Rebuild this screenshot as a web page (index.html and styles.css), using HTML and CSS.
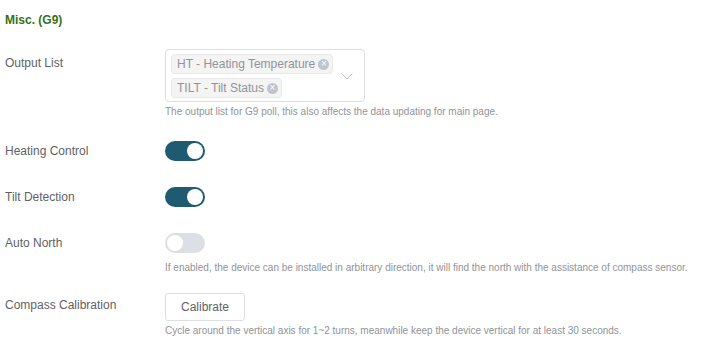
FILE: index.html
```html
<!DOCTYPE html>
<html lang="en">

<head>
    <meta charset="UTF-8">
    <meta name="viewport" content="width=device-width, initial-scale=1.0">
    <title>Misc. (G9)</title>
    <link rel="stylesheet" href="styles.css">
</head>

<body>
    <div class="section-title">Misc. (G9)</div>

    <div class="form-item first">
        <div class="label">Output List</div>
        <div class="content">
            <div class="select">
                <div class="tags">
                    <span class="tag">HT - Heating Temperature <span class="tag-close">&times;</span></span>
                    <span class="tag">TILT - Tilt Status <span class="tag-close">&times;</span></span>
                </div>
                <svg class="arrow" width="12" height="7" viewBox="0 0 12 7">
                    <path d="M0.5 0.5 L6 6 L11.5 0.5" fill="none" stroke="#c0c4cc" stroke-width="1"/>
                </svg>
            </div>
            <div class="help">The output list for G9 poll, this also affects the data updating for main page.</div>
        </div>
    </div>

    <div class="form-item">
        <div class="label">Heating Control</div>
        <div class="content">
            <span class="switch on"></span>
        </div>
    </div>

    <div class="form-item">
        <div class="label">Tilt Detection</div>
        <div class="content">
            <span class="switch on"></span>
        </div>
    </div>

    <div class="form-item">
        <div class="label">Auto North</div>
        <div class="content">
            <span class="switch"></span>
            <div class="help spaced">If enabled, the device can be installed in arbitrary direction, it will find the north with the assistance of compass sensor.</div>
        </div>
    </div>

    <div class="form-item">
        <div class="label label-btn">Compass Calibration</div>
        <div class="content">
            <button class="btn">Calibrate</button>
            <div class="help">Cycle around the vertical axis for 1~2 turns, meanwhile keep the device vertical for at least 30 seconds.</div>
        </div>
    </div>
</body>

</html>
```

FILE: styles.css
```css
body {
    margin: 0;
    padding: 0 5px;
    background: #fff;
    font-family: "Liberation Sans", Arial, sans-serif;
    font-size: 12px;
    color: #606266;
}

.section-title {
    margin-top: 13px;
    line-height: 14px;
    font-weight: bold;
    color: #37701c;
}

.form-item {
    display: flex;
    margin-top: 18px;
}

.form-item.first {
    margin-top: 22px;
}

.label {
    width: 160px;
    flex-shrink: 0;
    line-height: 28px;
}

.label-btn {
    line-height: 25px;
}

.content {
    display: flex;
    flex-direction: column;
    align-items: flex-start;
}

.select {
    position: relative;
    width: 200px;
    box-sizing: border-box;
    border: 1px solid #dcdfe6;
    border-radius: 4px;
    padding: 4px 30px 3px 5px;
}

.tags {
    display: flex;
    flex-wrap: wrap;
    gap: 4px;
}

.tag {
    display: inline-flex;
    align-items: center;
    height: 20px;
    box-sizing: border-box;
    padding: 0 3px 0 5px;
    background: #f4f4f5;
    border: 1px solid #e9e9eb;
    border-radius: 4px;
    color: #909399;
    white-space: nowrap;
}

.tag-close {
    display: inline-flex;
    align-items: center;
    justify-content: center;
    width: 11px;
    height: 11px;
    margin-left: 3px;
    border-radius: 50%;
    background: #c0c4cc;
    color: #fff;
    font-size: 10px;
    line-height: 1;
}

.arrow {
    position: absolute;
    right: 11px;
    top: 23px;
}

.help {
    margin-top: 3px;
    font-size: 10px;
    line-height: 14px;
    color: #909399;
    white-space: nowrap;
}

.help.spaced {
    margin-top: 4px;
}

.switch {
    position: relative;
    display: block;
    width: 40px;
    height: 20px;
    margin: 4px 0;
    border-radius: 10px;
    background: #dcdfe6;
}

.switch::after {
    content: "";
    position: absolute;
    top: 2px;
    left: 2px;
    width: 16px;
    height: 16px;
    border-radius: 50%;
    background: #fff;
}

.switch.on {
    background: #1f5b70;
}

.switch.on::after {
    left: 22px;
}

.btn {
    height: 28px;
    padding: 0 15px;
    background: #fff;
    border: 1px solid #dcdfe6;
    border-radius: 3px;
    font-family: inherit;
    font-size: 12px;
    color: #606266;
}
```
